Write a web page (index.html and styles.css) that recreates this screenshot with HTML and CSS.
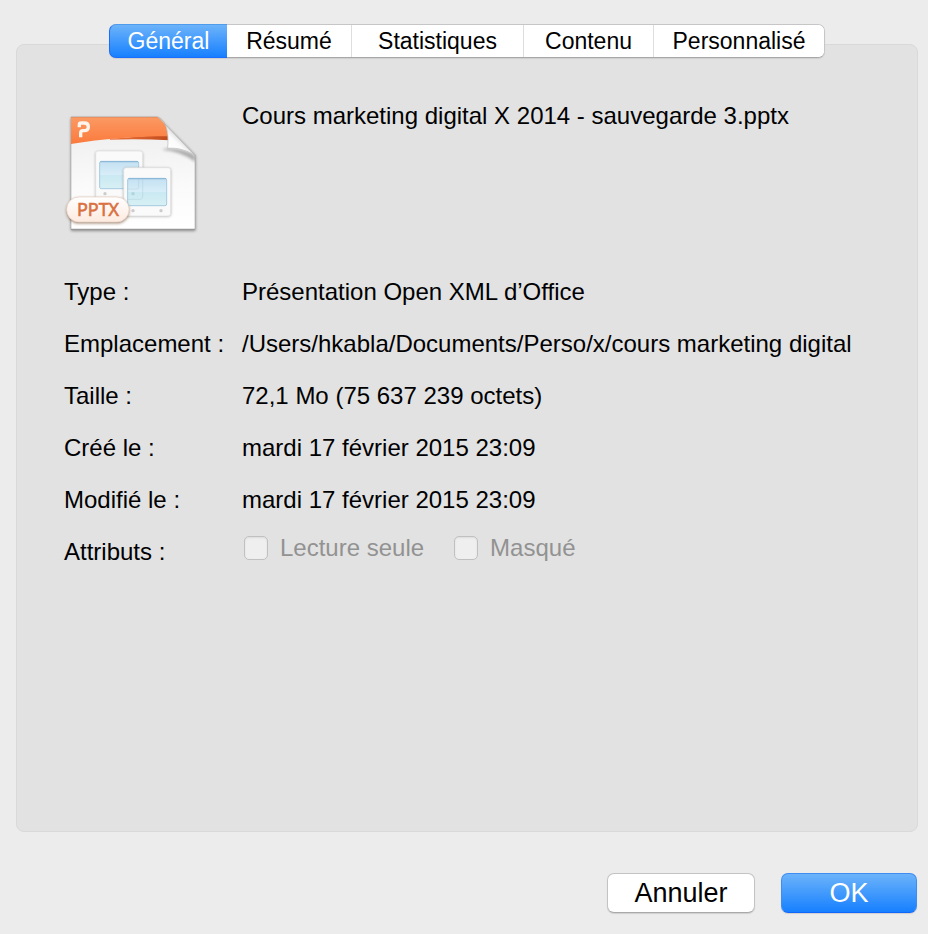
FILE: index.html
```html
<!DOCTYPE html>
<html lang="fr">
<head>
    <meta charset="UTF-8">
    <meta name="viewport" content="width=device-width, initial-scale=1.0">
    <title>Propriétés</title>
    <link rel="stylesheet" href="styles.css">
</head>
<body>
    <div class="tabs" role="tablist">
        <button type="button" class="tab general active" role="tab" aria-selected="true">Général</button>
        <button type="button" class="tab resume" role="tab">Résumé</button>
        <button type="button" class="tab stats" role="tab">Statistiques</button>
        <button type="button" class="tab contenu" role="tab">Contenu</button>
        <button type="button" class="tab perso" role="tab">Personnalisé</button>
    </div>

    <main class="panel">
        <div class="file">
            <svg class="file-icon" viewBox="27 0 438 420" aria-hidden="true">
                <defs>
                    <linearGradient id="paper" x1="0" y1="0" x2="0" y2="1">
                        <stop offset="0" stop-color="#ececec"/>
                        <stop offset="0.6" stop-color="#fafafa"/>
                        <stop offset="1" stop-color="#ffffff"/>
                    </linearGradient>
                    <linearGradient id="band" x1="0" y1="0" x2="0" y2="1">
                        <stop offset="0" stop-color="#fb9a63"/>
                        <stop offset="1" stop-color="#fb7a3d"/>
                    </linearGradient>
                    <linearGradient id="band-fold" x1="0" y1="0" x2="1" y2="0">
                        <stop offset="0" stop-color="#f0743c"/>
                        <stop offset="1" stop-color="#c04a1c"/>
                    </linearGradient>
                    <linearGradient id="curl" gradientUnits="userSpaceOnUse" x1="342" y1="128" x2="378" y2="90">
                        <stop offset="0" stop-color="#ffffff"/>
                        <stop offset="0.5" stop-color="#fbfbfb"/>
                        <stop offset="1" stop-color="#d2d2d2"/>
                    </linearGradient>
                    <linearGradient id="screen" x1="0" y1="0" x2="0" y2="1">
                        <stop offset="0" stop-color="#c3e0f2"/>
                        <stop offset="0.5" stop-color="#d9eef8"/>
                        <stop offset="0.52" stop-color="#c9e9f2"/>
                        <stop offset="1" stop-color="#d8f0f4"/>
                    </linearGradient>
                    <linearGradient id="label" x1="0" y1="0" x2="0" y2="1">
                        <stop offset="0" stop-color="#ffffff"/>
                        <stop offset="1" stop-color="#fdeadf"/>
                    </linearGradient>
                    <filter id="soft" x="-20%" y="-20%" width="140%" height="140%">
                        <feGaussianBlur stdDeviation="4"/>
                    </filter>
                    <clipPath id="sheet">
                        <path d="M48 36H308C324 40 330 50 340 70L420 150V373H48Z"/>
                    </clipPath>
                </defs>
                <path d="M48 40H310L421 152V377H48Z" fill="#000" opacity="0.45" filter="url(#soft)"/>
                <path d="M48 36H308L420 150V373H48Z" fill="url(#paper)" stroke="#b0b0b0" stroke-width="2"/>
                <path d="M48 373H420" stroke="#929292" stroke-width="3"/>
                <g clip-path="url(#sheet)">
                    <path d="M165 101L345 88V106Q250 100 165 104Z" fill="url(#band-fold)"/>
                    <path d="M48 36H310C332 44 336 70 338 94C250 94 140 102 48 117Z" fill="url(#band)"/>
                    <path d="M338 130Q390 132 420 152V170Q380 138 320 134Z" fill="#000" opacity="0.3" filter="url(#soft)"/>
                </g>
                <path d="M48 37H308" stroke="#d98962" stroke-width="2"/>
                <path d="M310 37C338 50 341 90 338 130C370 127 400 138 420 152Z" fill="url(#curl)" stroke="#b5b5b5" stroke-width="2"/>
                <path d="M73 67V59Q73 54 79 54H87Q100 54 100 65Q100 77 87 77H84Q77 77 77 84V97" fill="none" stroke="#fff4ec" stroke-width="10" stroke-linejoin="round"/>

                <g>
                    <rect x="122" y="140" width="141" height="144" rx="8" fill="#000" opacity="0.3" filter="url(#soft)"/>
                    <rect x="122" y="138" width="141" height="144" rx="8" fill="#fafafa" stroke="#e0e0e0" stroke-width="2"/>
                    <rect x="134" y="169" width="117" height="82" rx="5" fill="url(#screen)" stroke="#a5cbe0" stroke-width="3"/>
                    <path d="M136 170H249" stroke="#8db9d8" stroke-width="4"/>
                    <circle cx="150" cy="266" r="5" fill="#ccc"/>
                </g>
                <g>
                    <rect x="206" y="190" width="141" height="144" rx="8" fill="#000" opacity="0.35" filter="url(#soft)"/>
                    <rect x="206" y="188" width="141" height="145" rx="8" fill="#fafafa" stroke="#dedede" stroke-width="2"/>
                    <rect x="218" y="220" width="117" height="82" rx="5" fill="url(#screen)" stroke="#a5cbe0" stroke-width="3"/>
                    <path d="M220 221H333" stroke="#8db9d8" stroke-width="4"/>
                    <path d="M263 222V276Q263 283 256 283H218M251 222V247Q251 252 246 252H218" fill="none" stroke="#a7cbd8" stroke-width="2" opacity="0.6"/>
                    <circle cx="234" cy="266" r="5" fill="#a7c9d2" opacity="0.7"/>
                    <circle cx="234" cy="317" r="5" fill="#ccc"/>
                    <circle cx="318" cy="317" r="5" fill="#ccc"/>
                </g>

                <rect x="35" y="280" width="187" height="75" rx="37" fill="#5a2a10" opacity="0.6" filter="url(#soft)"/>
                <rect x="35" y="276" width="187" height="75" rx="37" fill="url(#label)" stroke="#e5cfc3" stroke-width="2"/>
                <text class="ext" x="129" y="333" text-anchor="middle">PPTX</text>
            </svg>
            <div class="file-name">Cours marketing digital X 2014 - sauvegarde 3.pptx</div>
        </div>

        <dl class="infos">
            <dt>Type :</dt>
            <dd>Présentation Open XML d’Office</dd>
            <dt>Emplacement :</dt>
            <dd>/Users/hkabla/Documents/Perso/x/cours marketing digital</dd>
            <dt>Taille :</dt>
            <dd>72,1 Mo (75 637 239 octets)</dd>
            <dt>Créé le :</dt>
            <dd>mardi 17 février 2015 23:09</dd>
            <dt>Modifié le :</dt>
            <dd>mardi 17 février 2015 23:09</dd>
            <dt>Attributs :</dt>
            <dd class="attributs">
                <label class="check"><input type="checkbox" disabled>Lecture seule</label>
                <label class="check"><input type="checkbox" disabled>Masqué</label>
            </dd>
        </dl>
    </main>

    <div class="actions">
        <button type="button" class="btn cancel">Annuler</button>
        <button type="button" class="btn ok">OK</button>
    </div>
</body>
</html>
```

FILE: styles.css
```css
* {
    box-sizing: border-box;
}
body {
    font-family: "Liberation Sans", Arial, sans-serif;
    font-size: 24px;
    line-height: 26px;
    color: #000;
    margin: 0;
    padding: 24px 10px 21px 16px;
    min-height: 100vh;
    display: flex;
    flex-direction: column;
    background-color: #ececec;
}
button {
    font-family: inherit;
    color: #000;
    border: none;
    padding: 0;
    background: #fff;
}

/* Tabs sit across the top edge of the panel */
.tabs {
    display: flex;
    align-self: center;
    height: 34px;
    margin-bottom: -14px;
    z-index: 1;
    border: 1px solid #c6c6c6;
    border-bottom-color: #a8a8a8;
    border-radius: 7px;
    background: #fff;
    box-shadow: 0 1px 1px #cfcfcf;
}
.tab {
    font-size: 23px;
    line-height: 32px;
    border-right: 1px solid #dedede;
}
.tab:last-child {
    border-right: none;
    border-radius: 0 6px 6px 0;
}
.tab.active {
    color: #fff;
    margin: -1px 0 -1px -1px;
    border: 1px solid #1a6dfb;
    border-top-color: #4f9bec;
    border-right: none;
    border-radius: 7px 0 0 7px;
    background: linear-gradient(#6cb3fa, #1780ff);
}
.general {
    width: 118px;
}
.resume {
    width: 125px;
}
.stats {
    width: 172px;
}
.contenu {
    width: 130px;
}
.perso {
    width: 170px;
}

.panel {
    flex: 1;
    padding: 58px 47px 24px;
    border: 1px solid #d9d9d9;
    border-radius: 8px;
    background: #e2e2e2;
}
.file {
    display: grid;
    grid-template-columns: 178px 1fr;
    margin-bottom: 34px;
}
.file-icon {
    width: 146px;
    height: 140px;
    margin-top: 2px;
}
.ext {
    font-family: "Open Sans", sans-serif;
    font-size: 54px;
    fill: #d9703f;
    stroke: #d9703f;
    stroke-width: 2px;
}
.infos {
    display: grid;
    grid-template-columns: 178px 1fr;
    row-gap: 26px;
    margin: 0;
}
.infos dd {
    margin: 0;
}
.infos .attributs {
    display: flex;
    gap: 30px;
    margin-top: -4px;
    padding-left: 2px;
}
.check {
    display: flex;
    align-items: center;
    gap: 12px;
    height: 26px;
    color: #929292;
}
.check input {
    appearance: none;
    width: 24px;
    height: 24px;
    margin: 0;
    border: 1px solid #c0c0c0;
    border-radius: 5px;
    background: #efefef;
    box-shadow: inset 0 1px 2px #dcdcdc;
}

.actions {
    display: flex;
    justify-content: flex-end;
    gap: 26px;
    margin-top: 41px;
    padding-right: 1px;
}
.btn {
    font-size: 27px;
    line-height: 38px;
    height: 40px;
    border: 1px solid #c3c3c3;
    border-bottom-color: #a9a9a9;
    border-radius: 7px;
    box-shadow: 0 1px 1px #d0d0d0;
}
.cancel {
    width: 148px;
}
.ok {
    width: 136px;
    color: #fff;
    border-color: #3f8df0;
    border-bottom-color: #1067fb;
    background: linear-gradient(#6cb3fa, #1780ff);
}
```
